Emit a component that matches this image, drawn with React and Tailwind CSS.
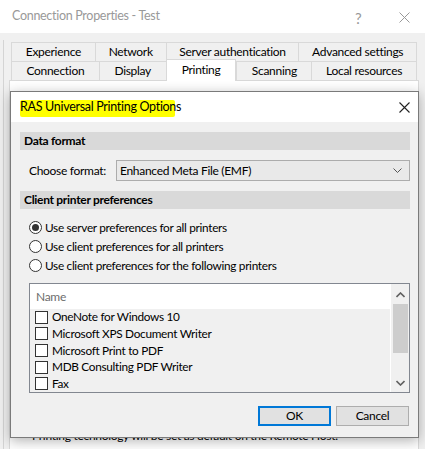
import React from "react";

const font = { fontFamily: 'Lato, "Noto Sans", sans-serif' };

function Tab({ w, children }) {
  return (
    <div
      className="flex items-center justify-center border-[#d9d9d9] text-[12px] text-black bg-[#f0f0f0] border-l border-t h-[19px]"
      style={{ width: w }}
    >
      {children}
    </div>
  );
}

function Radio({ checked, children }) {
  return (
    <div className="flex items-center h-[19px]">
      <div className="w-[13px] h-[13px] rounded-full border border-[#333] bg-white flex items-center justify-center">
        {checked && <div className="w-[7px] h-[7px] rounded-full bg-[#333]" />}
      </div>
      <span className="ml-[3px] text-[11.8px] text-black leading-none">{children}</span>
    </div>
  );
}

function Row({ children }) {
  return (
    <div className="flex items-center h-[17px] pl-[5px]">
      <div className="w-[13px] h-[13px] border border-[#333] bg-white" />
      <span className="ml-[4px] text-[11.8px] text-black leading-none">{children}</span>
    </div>
  );
}

export default function App() {
  return (
    <div className="relative w-[425px] h-[449px] overflow-hidden bg-[#f0f0f0] tracking-[-0.3px]" style={font}>
      {/* outer title bar */}
      <div className="h-[33px] bg-white flex items-center pl-[12px] relative">
        <span className="text-[12.5px] text-[#999]">Connection Properties - Test</span>
        <span className="absolute left-[355px] top-[7px] text-[15px] text-[#999]">?</span>
        <svg className="absolute left-[399px] top-[12px]" width="11" height="11" viewBox="0 0 11 11">
          <path d="M0.5 0.5 L10.5 10.5 M10.5 0.5 L0.5 10.5" stroke="#999" strokeWidth="1" />
        </svg>
      </div>

      {/* left edge line */}
      <div className="absolute left-[3px] top-[40px] w-px h-[409px] bg-[#d4d4d4]" />

      {/* tabs */}
      <div className="pt-[9px] pl-[11px]">
        <div className="flex w-[406px] border-r border-[#d9d9d9]">
          <Tab w={84}>Experience</Tab>
          <Tab w={71}>Network</Tab>
          <Tab w={133}>Server authentication</Tab>
          <Tab w={118}>Advanced settings</Tab>
        </div>
        <div className="flex w-[406px] border-r border-[#d9d9d9] items-end h-[19px]">
          <Tab w={88}>Connection</Tab>
          <Tab w={67}>Display</Tab>
          <div className="w-[71px] h-[22px] self-end relative z-10 bg-white border-l border-r border-t border-[#d9d9d9] flex items-start justify-center pt-[1px] text-[12px] translate-y-[1px]">
            Printing
          </div>
          <Tab w={75}>Scanning</Tab>
          <Tab w={105}>Local resources</Tab>
        </div>
      </div>
      {/* panel */}
      <div className="ml-[9px] w-[410px] h-[371px] bg-white border border-[#d9d9d9] relative">
        <div className="absolute left-[22px] top-[346px] text-[12px] text-black whitespace-nowrap">
          Printing technology will be set as default on the Remote Host.
        </div>
      </div>

      {/* dialog */}
      <div className="absolute left-[10px] top-[91px] w-[409px] h-[347px] border border-[#7a7a7a] bg-[#f0f0f0] shadow-[0_3px_12px_rgba(0,0,0,0.3)] flex flex-col">
        <div className="h-[30px] bg-white relative flex items-center pl-[9px]">
          <div className="absolute left-[9px] top-[8px] w-[155px] h-[17px] bg-[#ffff00] rounded-[2px]" />
          <span className="relative text-[12.5px] text-black">RAS Universal Printing Options</span>
          <svg className="absolute left-[388px] top-[10px]" width="11" height="11" viewBox="0 0 11 11">
            <path d="M0.5 0.5 L10.5 10.5 M10.5 0.5 L0.5 10.5" stroke="#222" strokeWidth="1.1" />
          </svg>
        </div>

        <div className="pl-[9px] pr-[8px] pt-[10px] flex flex-col">
          <div className="h-[18px] bg-[#d9d9d9] flex items-center pl-[4px] text-[12px] font-bold text-black">
            Data format
          </div>
          <div className="flex items-center mt-[10px] h-[21px]">
            <span className="pl-[9px] w-[96px] text-[12px] text-black">Choose format:</span>
            <div className="flex-1 h-[21px] border border-[#acacac] bg-[#e9e9e9] flex items-center pl-[3px] pr-[7px] justify-between">
              <span className="text-[12px] text-black">Enhanced Meta File (EMF)</span>
              <svg width="9" height="6" viewBox="0 0 9 6">
                <path d="M0.5 0.5 L4.5 4.5 L8.5 0.5" stroke="#555" strokeWidth="1" fill="none" />
              </svg>
            </div>
          </div>
          <div className="h-[18px] bg-[#d9d9d9] flex items-center pl-[4px] mt-[10px] text-[12px] font-bold text-black">
            Client printer preferences
          </div>
          <div className="mt-[9px] pl-[9px] flex flex-col">
            <Radio checked>Use server preferences for all printers</Radio>
            <Radio>Use client preferences for all printers</Radio>
            <Radio>Use client preferences for the following printers</Radio>
          </div>
          <div className="mt-[8px] ml-[9px] h-[110px] border border-[#828790] flex overflow-hidden">
            <div className="flex-1 flex flex-col">
              <div className="h-[25px] bg-white flex items-center pl-[6px] text-[12px] text-[#6d6d6d] shrink-0">
                Name
              </div>
              <Row>OneNote for Windows 10</Row>
              <Row>Microsoft XPS Document Writer</Row>
              <Row>Microsoft Print to PDF</Row>
              <Row>MDB Consulting PDF Writer</Row>
              <Row>Fax</Row>
            </div>
            <div className="w-[19px] border-l border-white bg-[#f0f0f0] flex flex-col items-center relative">
              <svg className="mt-[8px]" width="9" height="6" viewBox="0 0 9 6">
                <path d="M0.5 5 L4.5 1 L8.5 5" stroke="#606060" strokeWidth="1.6" fill="none" />
              </svg>
              <div className="mt-[6px] w-[15px] h-[49px] bg-[#cdcdcd]" />
              <div className="flex-1" />
              <svg className="mb-[6px]" width="9" height="6" viewBox="0 0 9 6">
                <path d="M0.5 1 L4.5 5 L8.5 1" stroke="#606060" strokeWidth="1.6" fill="none" />
              </svg>
            </div>
          </div>
          <div className="mt-[13px] flex justify-end gap-[5px] pr-[1px]">
            <div className="w-[73px] h-[20px] border-2 border-[#0078d7] bg-[#e1e1e1] flex items-center justify-center text-[12px] text-black">
              OK
            </div>
            <div className="w-[73px] h-[20px] border border-[#adadad] bg-[#e1e1e1] flex items-center justify-center text-[12px] text-black">
              Cancel
            </div>
          </div>
        </div>
      </div>
    </div>
  );
}
